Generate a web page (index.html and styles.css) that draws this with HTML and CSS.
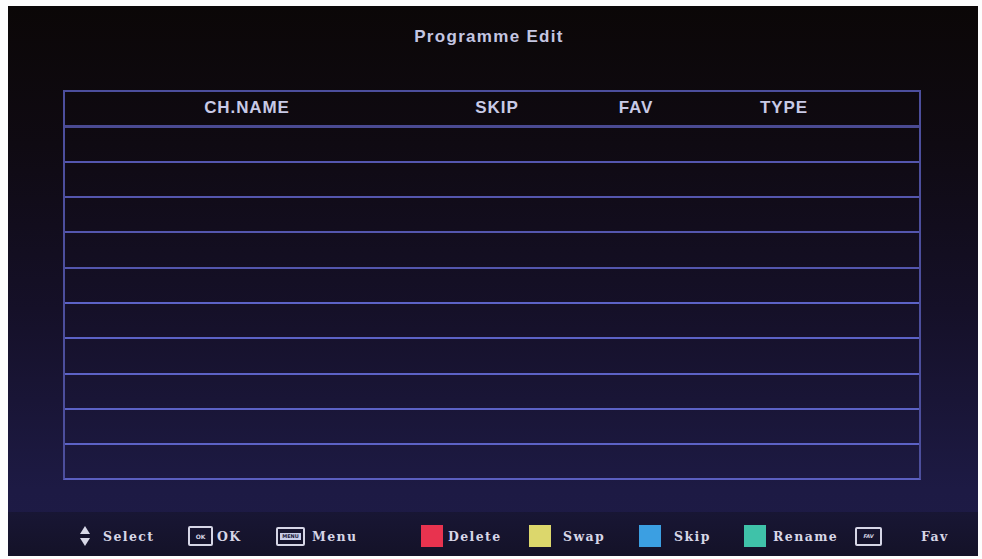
FILE: index.html
```html
<!DOCTYPE html>
<html>
<head>
	<meta charset="UTF-8">
	<title>Programme Edit</title>
	<link rel="stylesheet" href="styles.css">
</head>
<body>
	<div class="screen">
		<div class="title">Programme Edit</div>

		<div class="list">
			<div class="head">
				<div>CH.NAME</div>
				<div>SKIP</div>
				<div>FAV</div>
				<div>TYPE</div>
				<div></div>
			</div>
			<div class="row"></div>
			<div class="row"></div>
			<div class="row"></div>
			<div class="row"></div>
			<div class="row"></div>
			<div class="row"></div>
			<div class="row"></div>
			<div class="row"></div>
			<div class="row"></div>
			<div class="row last"></div>
		</div>

		<div class="help">
			<div class="item g12">
				<svg class="arrows" width="12" height="22" viewBox="0 0 12 22">
					<path d="M6 1 L11 9 L1 9 Z" fill="#d8d8e8"/>
					<path d="M6 21 L11 13 L1 13 Z" fill="#d8d8e8"/>
				</svg>
				<span>Select</span>
			</div>
			<div class="item g4">
				<div class="key ok"><span>OK</span></div>
				<span>OK</span>
			</div>
			<div class="item g7">
				<div class="key menu"><span>MENU</span></div>
				<span>Menu</span>
			</div>
			<div class="item g5">
				<div class="swatch red"></div>
				<span>Delete</span>
			</div>
			<div class="item g12">
				<div class="swatch yellow"></div>
				<span>Swap</span>
			</div>
			<div class="item g13">
				<div class="swatch blue"></div>
				<span>Skip</span>
			</div>
			<div class="item g7">
				<div class="swatch teal"></div>
				<span>Rename</span>
			</div>
			<div class="item g39">
				<div class="key fav"><span>FAV</span></div>
				<span>Fav</span>
			</div>
		</div>
	</div>
</body>
</html>
```

FILE: styles.css
```css
* {
	margin: 0;
	padding: 0;
	box-sizing: border-box;
}

body {
	background-color: #fdfdfd;
	padding: 6px 4px 3px 8px;
}

.screen {
	width: 970px;
	height: 550px;
	background: linear-gradient(to bottom, #0b0707 0%, #0f0a12 25%, #151028 55%, #1d1a44 88%, #1e1b46 100%);
	display: flex;
	flex-direction: column;
	overflow: hidden;
}

.title {
	height: 84px;
	padding-top: 21px;
	padding-right: 8px;
	text-align: center;
	font-family: "Liberation Sans", Arial, sans-serif;
	font-weight: bold;
	font-size: 17px;
	letter-spacing: 1.3px;
	color: #c4c6e2;
}

/* channel list */
.list {
	margin-left: 55px;
	width: 858px;
	border: 2px solid #4c4e9c;
	border-bottom-color: #5b5fc0;
}

.head {
	height: 36px;
	display: grid;
	grid-template-columns: 364px 136px 142px 154px 1fr;
	align-items: center;
	border-bottom: 3px solid #4a4a92;
	font-family: "Liberation Sans", Arial, sans-serif;
	font-weight: bold;
	font-size: 17px;
	letter-spacing: 0.9px;
	color: #c8cae6;
}

.head div {
	text-align: center;
}

.row {
	height: 35.3px;
	border-bottom: 2px solid #5456ae;
}

.row:nth-child(n+6) {
	border-bottom-color: #5c62c6;
}

.row.last {
	border-bottom: none;
	height: 33px;
}

/* help bar */
.help {
	margin-top: 32px;
	height: 44px;
	background: linear-gradient(to bottom, #181634, #141228);
	display: grid;
	grid-template-columns: 109px 88px 145px 108px 110px 105px 111px 1fr;
	align-items: center;
	padding-left: 71px;
	padding-top: 4px;
	font-family: "DejaVu Serif", "Liberation Serif", serif;
	font-weight: bold;
	font-size: 12.5px;
	letter-spacing: 1.4px;
	color: #d6d6e6;
}

.item {
	display: flex;
	align-items: center;
}

.g4 { gap: 4px; }
.g5 { gap: 5px; }
.g7 { gap: 7px; }
.g12 { gap: 12px; }
.g13 { gap: 13px; }
.g39 { gap: 39px; }

.swatch {
	width: 22px;
	height: 22px;
}

.red { background-color: #e8334f; }
.yellow { background-color: #dcd76c; }
.blue { background-color: #3b9fe2; }
.teal { background-color: #3fc2a9; }

.key {
	border: 2px solid #d6d6e6;
	border-radius: 2px;
	display: flex;
	align-items: center;
	justify-content: center;
	font-family: "DejaVu Sans", sans-serif;
	letter-spacing: 0;
}

.key span {
	font-size: 6px;
	color: #d6d6e6;
}

.ok {
	width: 25px;
	height: 20px;
}

.menu {
	width: 29px;
	height: 19px;
}

.menu span {
	background-color: #c8cce8;
	color: #1a1838;
	padding: 0 2px;
	font-size: 5px;
	line-height: 7px;
}

.fav {
	width: 27px;
	height: 19px;
}

.fav span {
	font-size: 5px;
	font-style: italic;
}
```
